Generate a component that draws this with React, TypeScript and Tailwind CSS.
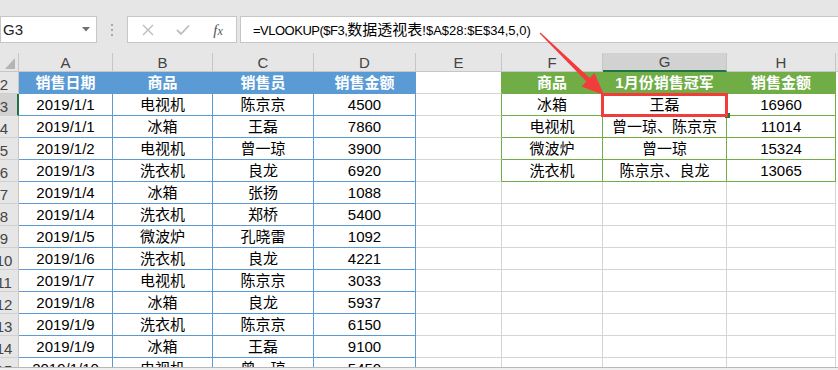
import React from "react";

const FONT = '"Liberation Sans","Noto Sans CJK SC",sans-serif';

const blueRows: string[][] = [
  ["2019/1/1", "电视机", "陈京京", "4500"],
  ["2019/1/1", "冰箱", "王磊", "7860"],
  ["2019/1/2", "电视机", "曾一琼", "3900"],
  ["2019/1/3", "洗衣机", "良龙", "6920"],
  ["2019/1/4", "冰箱", "张扬", "1088"],
  ["2019/1/4", "洗衣机", "郑桥", "5400"],
  ["2019/1/5", "微波炉", "孔晓雷", "1092"],
  ["2019/1/6", "洗衣机", "良龙", "4221"],
  ["2019/1/7", "电视机", "陈京京", "3033"],
  ["2019/1/8", "冰箱", "良龙", "5937"],
  ["2019/1/9", "洗衣机", "陈京京", "6150"],
  ["2019/1/9", "冰箱", "王磊", "9100"],
  ["2019/1/10", "电视机", "曾一琼", "5450"],
];

const greenRows: string[][] = [
  ["冰箱", "王磊", "16960"],
  ["电视机", "曾一琼、陈京京", "11014"],
  ["微波炉", "曾一琼", "15324"],
  ["洗衣机", "陈京京、良龙", "13065"],
];

const GRID = "grid grid-cols-[19px_94px_100px_101px_102px_86px_101px_124px_109px_2px]";

function Cell({ className, children }: { className: string; children?: React.ReactNode }) {
  return (
    <div className={"flex items-center justify-center whitespace-nowrap overflow-hidden text-[15px] leading-none " + className}>
      {children}
    </div>
  );
}

export default function App() {
  const rows = [];
  for (let r = 2; r <= 15; r++) {
    const isHeader = r === 2;
    const data = isHeader ? ["销售日期", "商品", "销售员", "销售金额"] : blueRows[r - 3];
    const inGreen = r <= 6;
    const gdata = isHeader ? ["商品", "1月份销售冠军", "销售金额"] : inGreen ? greenRows[r - 3] : ["", "", ""];
    rows.push(
      <React.Fragment key={r}>
        <div
          className={
            "h-[22px] overflow-hidden border-b border-[#d0d0d0] text-[15px] leading-none text-[#444] flex items-center " +
            (r === 3 ? "bg-[#d2d2d2] border-r-2 border-r-[#217346]" : "bg-[#e6e6e6] border-r border-r-[#c6c6c6]")
          }
        >
          <div className="w-[8px] shrink-0 flex justify-center pt-[3px]">
            <span>{r}</span>
          </div>
        </div>
        {data.map((t, i) => (
          <Cell
            key={"b" + i}
            className={
              isHeader
                ? "h-[22px] bg-[#5b9bd5] text-white font-bold border-r border-b border-[#5b9bd5]"
                : "h-[22px] bg-white text-black border-r border-b border-[#5b9bd5]"
            }
          >
            {t}
          </Cell>
        ))}
        <Cell
          className={
            "h-[22px] bg-white border-b border-b-[#d4d4d4] border-r " +
            (inGreen ? "border-r-[#70ad47]" : "border-r-[#d4d4d4]")
          }
        />
        {gdata.map((t, i) => (
          <Cell
            key={"g" + i}
            className={
              isHeader
                ? "h-[22px] bg-[#70ad47] text-white font-bold border-r border-b border-[#70ad47]"
                : inGreen
                ? "h-[22px] bg-white text-black border-r border-b border-[#70ad47]"
                : "h-[22px] bg-white border-r border-b border-[#d4d4d4]"
            }
          >
            {t}
          </Cell>
        ))}
        <div className="h-[22px] bg-white" />
      </React.Fragment>
    );
  }

  const letters = ["A", "B", "C", "D", "E", "F", "G", "H"];

  return (
    <div className="relative w-[838px] h-[370px] overflow-hidden bg-[#e6e6e6]" style={{ fontFamily: FONT }}>
      {/* top strip */}
      <div className="h-[16px]" />
      {/* formula bar */}
      <div className="flex h-[27px]">
        <div className="w-[97px] h-full bg-white border border-[#c6c6c6] flex items-center justify-between pl-[2px] pr-[6px]">
          <span className="text-[15px] leading-none text-[#222]">G3</span>
          <svg width="8" height="5" viewBox="0 0 8 5">
            <path d="M0 0 L8 0 L4 4.5 Z" fill="#707070" />
          </svg>
        </div>
        <div className="w-[30px] flex flex-col items-center justify-center gap-[3px]">
          <div className="w-[2px] h-[2px] bg-[#a8a8a8]" />
          <div className="w-[2px] h-[2px] bg-[#a8a8a8]" />
          <div className="w-[2px] h-[2px] bg-[#a8a8a8]" />
        </div>
        <div className="w-[110px] h-full bg-white border border-[#c6c6c6] flex items-center">
          <div className="w-[38px] flex justify-center pl-[1px]">
            <svg width="12" height="12" viewBox="0 0 12 12">
              <path d="M1 1 L11 11 M11 1 L1 11" stroke="#bdbdbd" strokeWidth="1.4" />
            </svg>
          </div>
          <div className="w-[34px] flex justify-center">
            <svg width="14" height="12" viewBox="0 0 14 12">
              <path d="M1 6 L5 10 L13 1.5" stroke="#bdbdbd" strokeWidth="1.8" fill="none" />
            </svg>
          </div>
          <div className="w-[36px] flex justify-center">
            <span className="italic text-[#555] leading-none" style={{ fontFamily: '"Liberation Serif",serif' }}>
              <span className="text-[15px]">f</span>
              <span className="text-[12px]">x</span>
            </span>
          </div>
        </div>
        <div className="ml-[3px] flex-1 h-full bg-white border-y border-l border-[#c6c6c6] flex items-center pl-[12px]">
          <span className="leading-none text-black whitespace-nowrap flex items-baseline">
            <span className="text-[13px] tracking-[-0.5px]">=VLOOKUP($F3,</span>
            <span className="text-[15px]">数据透视表</span>
            <span className="text-[13px]">!$A$28:$E$34,5,0)</span>
          </span>
        </div>
      </div>
      <div className="h-[10px]" />
      {/* column header */}
      <div className={GRID + " h-[19px]"}>
        <div className="relative bg-[#e6e6e6] border-r border-b border-[#c6c6c6]">
          <svg className="absolute left-[5px] top-[5px]" width="10" height="11" viewBox="0 0 10 11">
            <path d="M10 0 L10 11 L0 11 Z" fill="#b4b4b4" />
          </svg>
        </div>
        {letters.map((l) => (
          <div
            key={l}
            className={
              "flex items-center justify-center text-[15px] leading-none text-[#444] border-r border-r-[#c6c6c6] " +
              (l === "G" ? "bg-[#d2d2d2] border-b-2 border-b-[#217346]" : "bg-[#e6e6e6] border-b border-b-[#c6c6c6]")
            }
          >
            {l}
          </div>
        ))}
        <div className="bg-[#e6e6e6] border-b border-[#c6c6c6]" />
      </div>
      {/* body */}
      <div className="h-[295px] overflow-hidden bg-white">
        <div className={GRID}>{rows}</div>
      </div>
      {/* bottom strip */}
      <div className="h-[3px] border-t border-[#b8b8b8] bg-[#f0f0f0]" />

      {/* selection overlays */}
      <div className="absolute left-[725px] top-[113px] w-[5px] h-[5px] bg-[#217346]" />
      <div className="absolute left-[601px] top-[93px] w-[127px] h-[24px] border-[3px] border-[#f23c3c]" />
      <svg className="absolute inset-0 pointer-events-none" width="838" height="370" viewBox="0 0 838 370">
        <polygon points="539.6,33.4 540.4,32.6 590.0,78.3 586.6,81.7" fill="#f23c3c" />
        <polygon points="604,95 581.5,86.5 594.5,73.0" fill="#f23c3c" />
      </svg>
    </div>
  );
}
